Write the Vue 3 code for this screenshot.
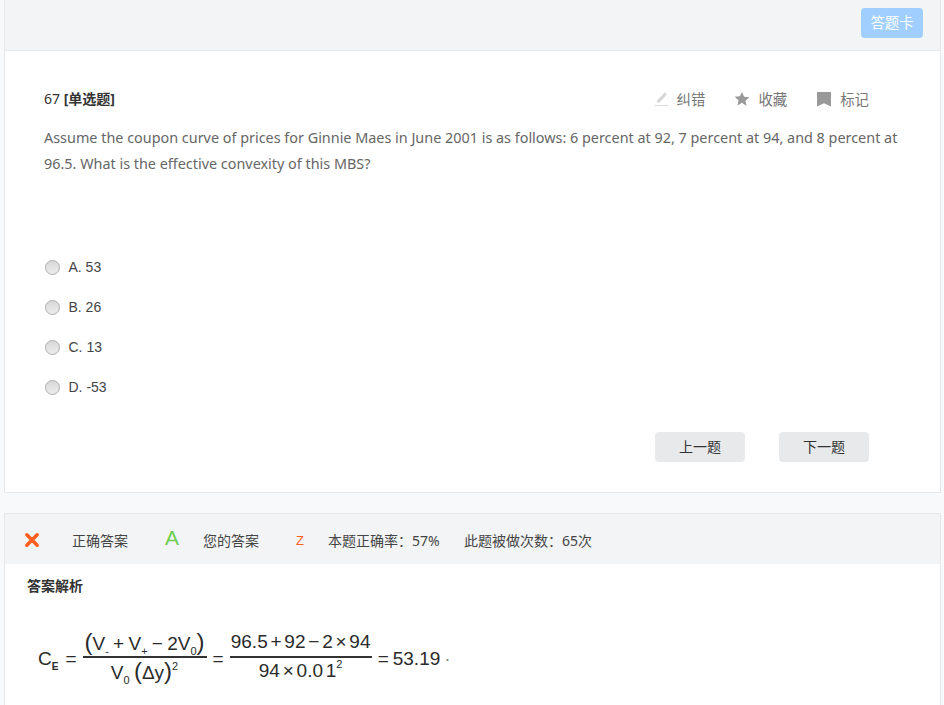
<template>
  <div class="page">
    <section class="panel">
      <header class="top">
        <button class="card-btn">答题卡</button>
      </header>
      <div class="body">
        <div class="title-row">
          <div class="qno">67 <b>[单选题]</b></div>
          <div class="tools">
            <span class="tool">
              <svg width="16" height="16" viewBox="0 0 16 16"><path d="M11.800 1.200l2.200 2-7.300 8-2.800.9.600-2.900z" fill="#d6d6d6"/><rect x="1.500" y="14" width="14" height="1" fill="#dcdcdc"/></svg>
              纠错
            </span>
            <span class="tool">
              <svg width="16" height="16" viewBox="0 0 16 16"><path d="M8 .9l2.100 4.900 5.300.5-4 3.500 1.200 5.200L8 11.800l-4.600 2.700 1.200-5.200-4-3.500 5.300-.5z" fill="#999"/></svg>
              收藏
            </span>
            <span class="tool">
              <svg width="16" height="16" viewBox="0 0 16 16"><path d="M1 1h14v14.500l-7-3.200-7 3.200z" fill="#999"/></svg>
              标记
            </span>
          </div>
        </div>
        <p class="stem">Assume the coupon curve of prices for Ginnie Maes in June 2001 is as follows: 6 percent at 92, 7 percent at 94, and 8 percent at 96.5. What is the effective convexity of this MBS?</p>
        <ul class="options">
          <li v-for="o in options" :key="o" class="option"><i class="radio"></i>{{ o }}</li>
        </ul>
        <div class="nav">
          <button class="nav-btn">上一题</button>
          <button class="nav-btn">下一题</button>
        </div>
      </div>
    </section>

    <section class="panel result">
      <div class="stats">
        <svg class="cross" width="16" height="16" viewBox="0 0 16 16"><path d="M2.800 2.800l10.400 10.400M13.200 2.800L2.800 13.200" stroke="#ff5f1f" stroke-width="3.600" stroke-linecap="round"/></svg>
        <span class="s1">正确答案</span>
        <span class="ans">A</span>
        <span class="s2">您的答案</span>
        <span class="mine">Z</span>
        <span class="s3">本题正确率：57%</span>
        <span class="s4">此题被做次数：65次</span>
      </div>
      <div class="analysis">
        <h4>答案解析</h4>
        <div class="formula">
          <span class="ce">C<sub>E</sub></span>
          <span class="eq">=</span>
          <span class="frac f1">
            <span class="num"><em>(</em>V<sub>-</sub> + V<sub>+</sub> − 2V<sub>0</sub><em>)</em></span>
            <span class="den">V<sub>0</sub> <em>(</em>Δy<em>)</em><sup class="hi">2</sup></span>
          </span>
          <span class="eq">=</span>
          <span class="frac f2">
            <span class="num">96.5 + 92 − 2 × 94</span>
            <span class="den">94 × 0.0 1<sup class="hi">2</sup></span>
          </span>
          <span class="eq">=</span>
          <span class="val">53.19</span>
          <span class="dot">·</span>
        </div>
      </div>
    </section>
  </div>
</template>

<script setup>
const options = ['A. 53', 'B. 26', 'C. 13', 'D. -53']
</script>

<style>
html, body { margin: 0; background: #f8f9fb; }
</style>

<style scoped>
.page {
  width: 944px;
  height: 705px;
  overflow: hidden;
  box-sizing: border-box;
  padding: 0 3px 0 4px;
  font-family: "Noto Sans", "Noto Sans CJK SC", sans-serif;
  color: #333;
  font-size: 14px;
}
.panel { background: #fff; border: 1px solid #e6e7e9; border-top: 0; box-sizing: border-box; }
.top {
  height: 51px;
  box-sizing: border-box;
  background: #f3f4f6;
  border-bottom: 1px solid #e6e7e9;
  display: flex;
  justify-content: flex-end;
  padding: 8px 17px 0 0;
}
.card-btn {
  width: 62px;
  height: 30px;
  border: 0;
  border-radius: 4px;
  background: #a0cfff;
  color: #fff;
  font: 14.400px "Noto Sans CJK SC", sans-serif;
  padding: 0 0 3px;
}
.body { height: 441px; box-sizing: border-box; padding: 37px 71px 0 39px; }
.title-row { display: flex; justify-content: space-between; align-items: center; height: 22px; }
.qno { font-size: 14px; color: #333; margin-bottom: 2px; }
.qno b { font-weight: 700; }
.tools { display: flex; gap: 29px; color: #777; font-size: 14.400px; margin-bottom: 2px; }
.tool { display: inline-flex; align-items: center; gap: 8px; }
.tool svg { margin-top: 2px; }
.stem {
  margin: 15px 0 0;
  font-size: 14.400px;
  line-height: 26px;
  color: #666;
  width: 860px;
  height: 122px;
}
.options { list-style: none; margin: 0; padding: 0; }
.option {
  height: 40px;
  display: flex;
  align-items: center;
  font-family: "Liberation Sans", sans-serif;
  font-size: 14px;
  color: #444;
}
.radio {
  width: 13px;
  height: 13px;
  border: 1px solid #adadad;
  border-radius: 50%;
  background: linear-gradient(#d8d8d8, #ececec);
  margin: 0 8.500px 0 1px;
  flex: none;
}
.nav { display: flex; justify-content: flex-end; gap: 34px; margin-top: 25px; }
.nav-btn {
  width: 90px;
  height: 30px;
  border: 0;
  border-radius: 4px;
  background: #e8e9eb;
  color: #333;
  font: 14px "Noto Sans CJK SC", sans-serif;
  padding: 0 0 2px;
}
.result { margin-top: 20px; border-top: 1px solid #e6e7e9; height: 220px; }
.stats {
  height: 50px;
  background: #f3f4f6;
  display: flex;
  align-items: center;
  font-size: 14px;
  color: #444;
  padding-left: 19px;
}
.cross { flex: none; margin-top: 1px; }
.s1 { margin-left: 32px; width: 57px; margin-top: 1px; }
.ans { margin-left: 36px; color: #6fcf4f; font-size: 21px; width: 14px; margin-top: -4px; line-height: 1; font-family: "Liberation Sans", sans-serif; }
.s2 { margin-left: 24px; width: 57px; margin-top: 1px; }
.mine { margin-left: 36px; color: #ff5f1f; font-size: 13px; width: 10px; margin-top: 3px; font-family: "Liberation Sans", sans-serif; }
.s3 { margin-left: 22px; width: 112px; margin-top: 1px; white-space: nowrap; }
.s4 { margin-left: 24px; margin-top: 1px; white-space: nowrap; }
.analysis { padding: 13px 22px 0; }
h4 { margin: 0; font-size: 14px; font-weight: 700; color: #333; line-height: 18px; }
.formula {
  display: flex;
  align-items: center;
  margin: 30px 0 0 11px;
  font-family: "Liberation Sans", sans-serif;
  font-size: 19px;
  color: #2b2b2b;
  white-space: nowrap;
  word-spacing: -1px;
}
.ce { margin-right: 1px; }
.ce sub { font-size: 10px; font-weight: 700; }
.eq { margin: 0 6px; }
.frac { display: flex; flex-direction: column; align-items: center; }
.f1 { width: 124px; }
.f2 { width: 142px; word-spacing: -2.500px; }
.num { align-self: stretch; text-align: center; border-bottom: 2px solid #333; line-height: 33px; height: 31px; }
.den { line-height: 26px; height: 34px; }
sub, sup { font-size: 11px; line-height: 0; }
.hi { vertical-align: 9px; }
em { font-style: normal; font-size: 24px; font-weight: 300; }
.val { margin-left: -2px; }
.dot { margin-left: 4px; color: #888; }
</style>
